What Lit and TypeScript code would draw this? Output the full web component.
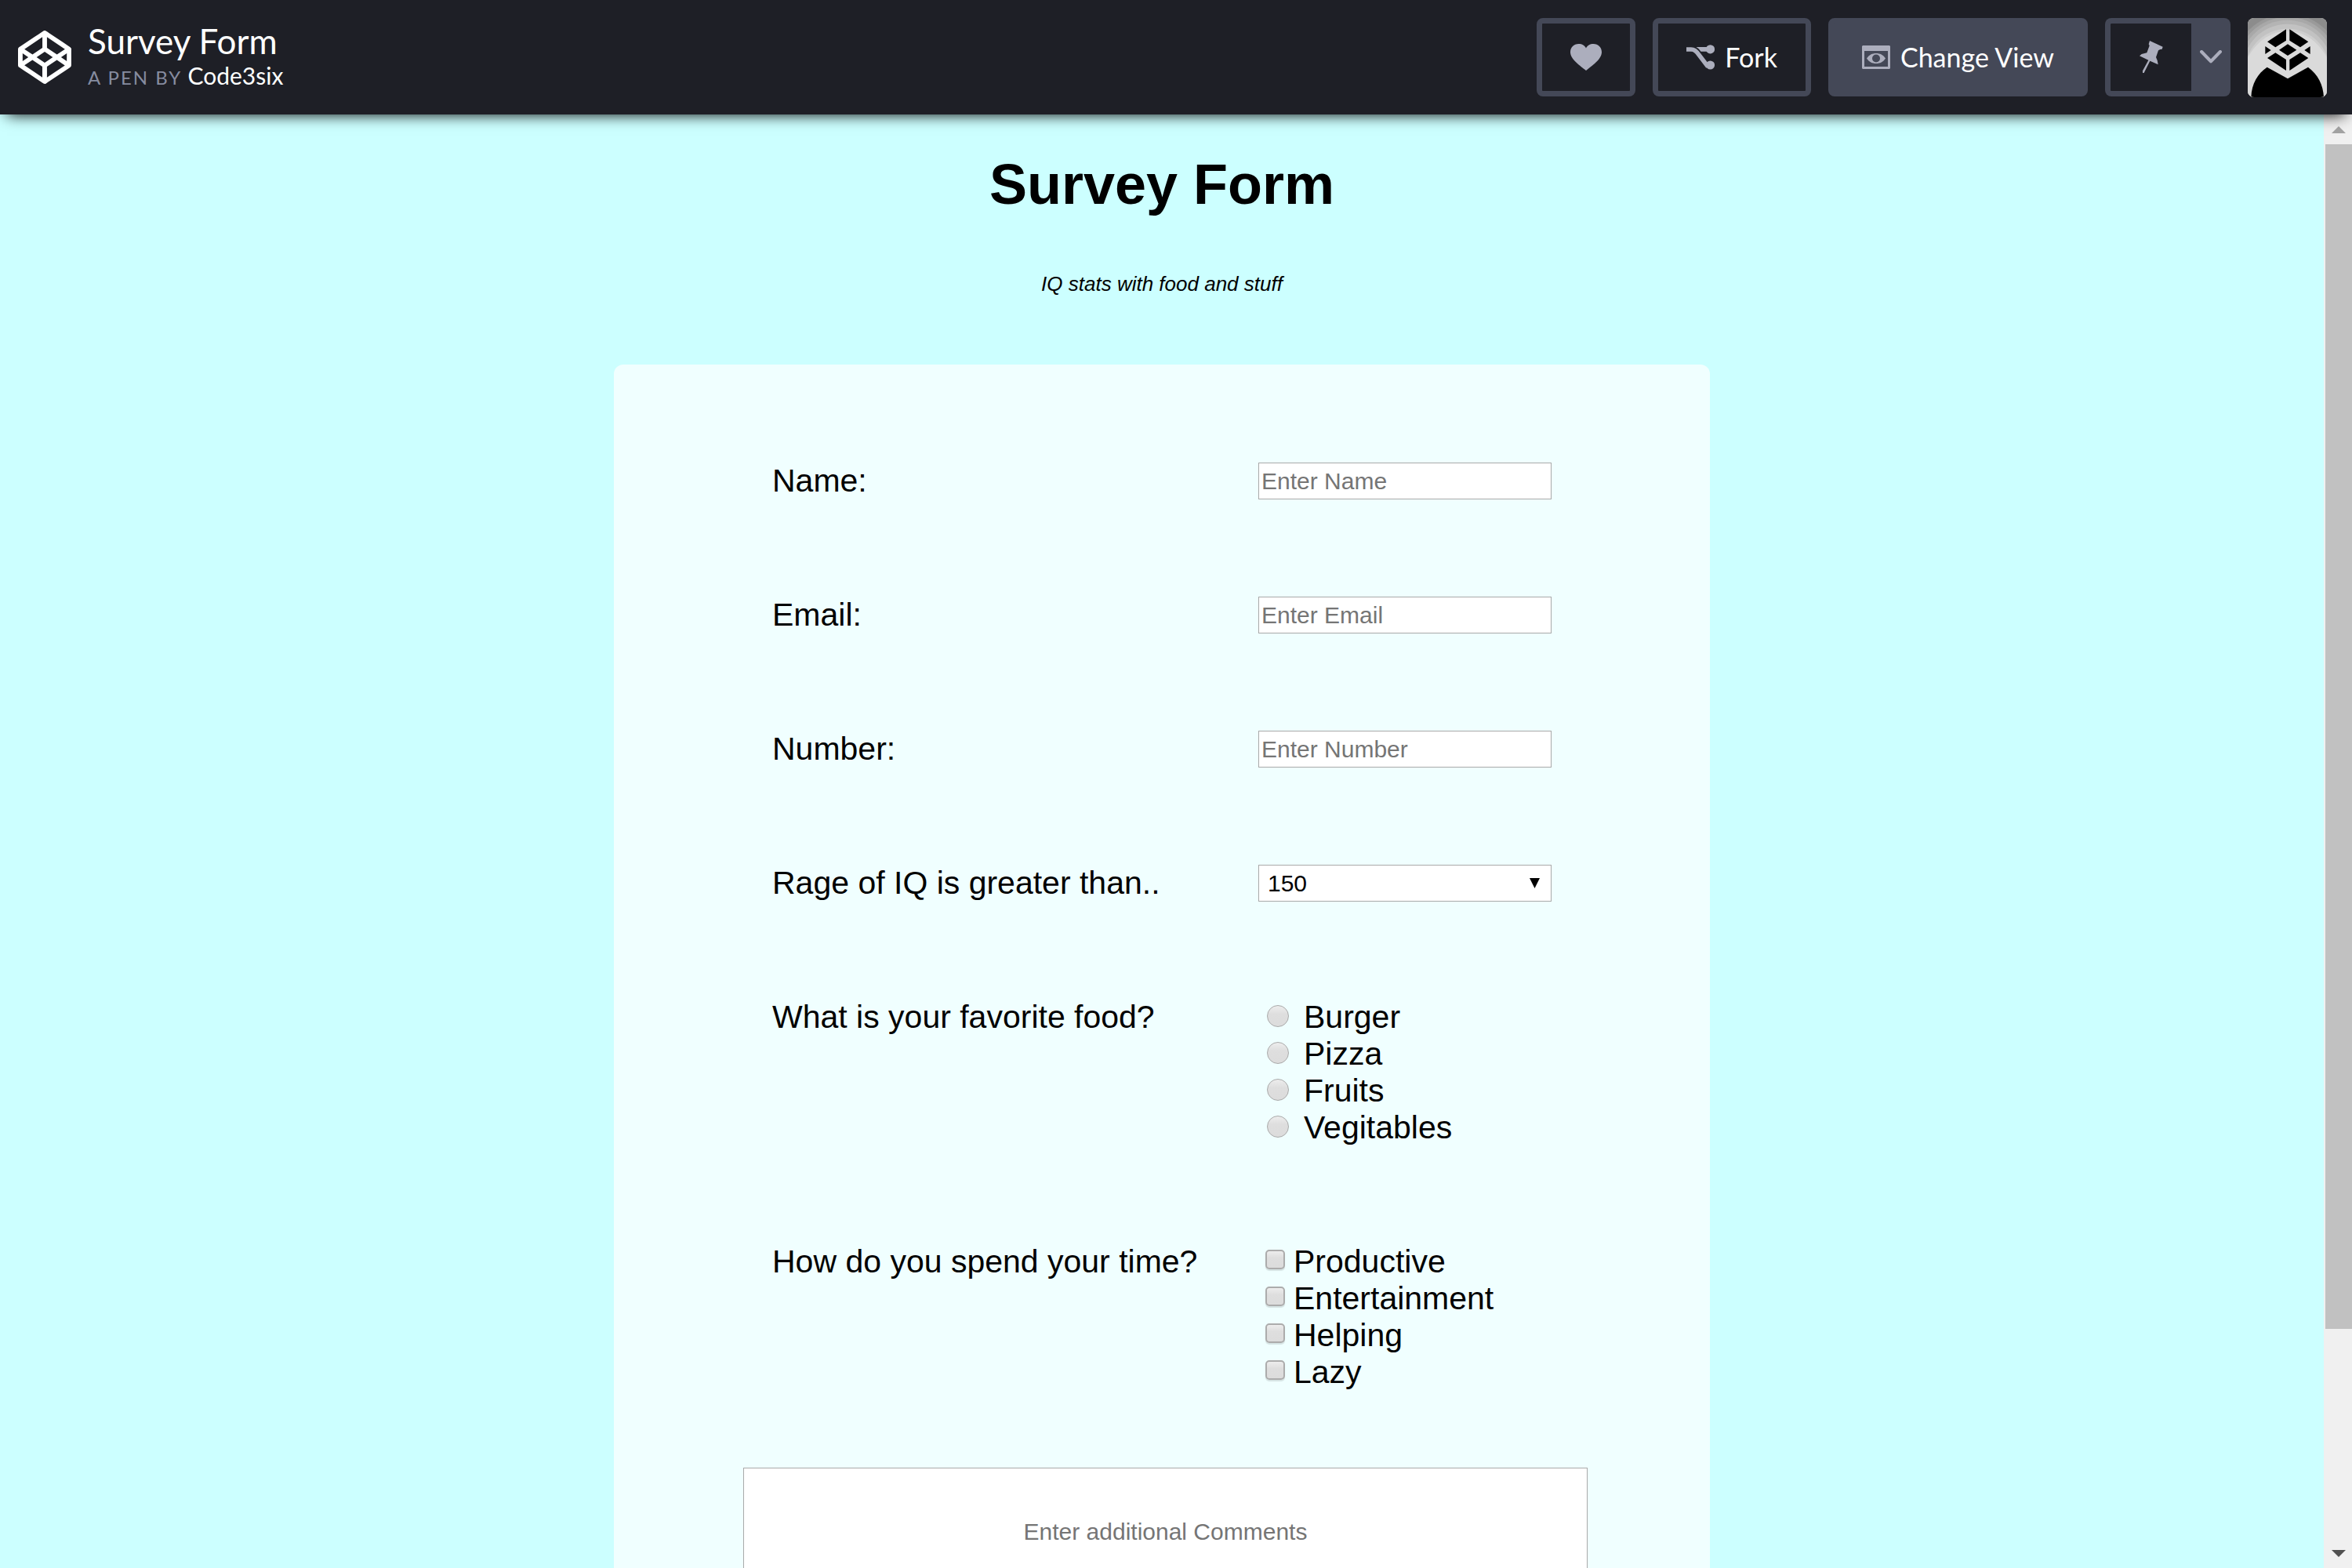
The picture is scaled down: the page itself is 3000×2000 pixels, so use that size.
import { LitElement, html, css, svg } from "lit";
import { customElement } from "lit/decorators.js";

const LOGO = svg`<path fill="currentColor" d="M100 34.2c-.4-2.6-3.3-4-5.3-5.3-3.6-2.4-7.1-4.7-10.7-7.1-8.5-5.7-17.1-11.4-25.6-17.1-2-1.3-4-2.7-6-4-1.4-1-3.3-1-4.8 0-5.7 3.8-11.5 7.7-17.2 11.5L5.2 29C3 30.4.1 31.8 0 34.8c-.1 3.3 0 6.7 0 10v16c0 2.9-.6 6.3 2.1 8.1 6.4 4.4 12.9 8.6 19.4 12.9 8 5.3 16 10.7 24 16 2.2 1.5 4.4 3.1 7.1 1.3 2.3-1.5 4.5-3 6.8-4.5 8.9-5.9 17.8-11.9 26.7-17.8l9.9-6.6c.6-.4 1.3-.8 1.9-1.3 1.4-1 2-2.4 2-4.1V37.3c.1-1.1.2-2.1.1-3.1 0-.1 0 .2 0 0zM54.3 12.3L88 34.8 73 44.9 54.3 32.4V12.3zm-8.6 0v20L27.1 44.8 12 34.8l33.7-22.5zM8.6 42.8L19.3 50 8.6 57.2V42.8zm37.1 44.9L12 65.2l15-10.1 18.6 12.5v20.1zM50 60.2L34.8 50 50 39.8 65.2 50 50 60.2zm4.3 27.5v-20l18.6-12.5 15 10.1-33.6 22.4zm37.1-30.5L80.7 50l10.8-7.2-.1 14.4z"/>`;

@customElement("pen-header")
class PenHeader extends LitElement {
  static styles = css`
    :host {
      display: flex;
      align-items: center;
      box-sizing: border-box;
      height: 146px;
      padding: 0 32px 0 23px;
      background: #1e1f26;
      color: #fff;
      font-family: Lato, "Liberation Sans", sans-serif;
      box-shadow: 0 9px 18px -9px #000;
      position: relative;
      z-index: 1;
    }
    svg {
      display: block;
      flex: none;
    }
    .brand {
      display: flex;
      color: inherit;
    }
    .titles {
      margin-left: 21px;
      flex: 1;
    }
    .title {
      margin: 0;
      font-size: 44px;
      font-weight: 400;
      line-height: 48px;
    }
    .by {
      margin: 0;
      font-size: 24px;
      line-height: 40px;
      color: #868ca0;
      letter-spacing: 2px;
    }
    .author {
      color: #fff;
      font-size: 30px;
      letter-spacing: normal;
      text-decoration: none;
    }
    .actions {
      display: flex;
      gap: 22px;
    }
    .button {
      display: flex;
      align-items: center;
      justify-content: center;
      gap: 13px;
      box-sizing: border-box;
      height: 100px;
      margin: 0;
      padding: 0 36px;
      border: 7px solid #444857;
      border-radius: 8px;
      background: #1e1f26;
      color: #acaebd;
      font: 400 34px/44px Lato, "Liberation Sans", sans-serif;
    }
    .label {
      color: #fff;
    }
    .filled {
      background: #444857;
    }
    .split {
      display: flex;
    }
    .pin {
      width: 110px;
      padding: 0;
      border-right: 0;
      border-radius: 8px 0 0 8px;
    }
    .more {
      width: 50px;
      padding: 0;
      border: 0;
      border-radius: 0 8px 8px 0;
      background: #444857;
    }
    .avatar {
      display: block;
      padding: 0;
      border: 0;
      border-radius: 8px;
      overflow: hidden;
      background: #ddd;
    }
  `;

  render() {
    return html`
      <a class="brand" href="#" aria-label="Home">
        <svg width="68" height="68" viewBox="0 0 100 100">${LOGO}</svg>
      </a>
      <div class="titles">
        <h1 class="title">Survey Form</h1>
        <p class="by">A PEN BY <a class="author" href="#">Code3six</a></p>
      </div>
      <div class="actions">
        <button class="button" aria-label="Love">
          <svg width="40" height="34" viewBox="0 0 40 34">
            <path fill="currentColor" d="M20 34C13 28 0 20 0 10.500 0 4.500 4.500 0 10.500 0 15 0 18.500 2 20 5.500 21.500 2 25 0 29.500 0 35.500 0 40 4.500 40 10.500 40 20 27 28 20 34z"/>
          </svg>
        </button>
        <button class="button">
          <svg width="36" height="32" viewBox="0 0 36 32" fill="currentColor">
            <path d="M0 6h6c5 0 7.500 3 10 7l11.500 15" fill="none" stroke="currentColor" stroke-width="5.600"/>
            <path d="M12.500 3H28v5.800h-9.500C17 6.500 15 4.500 12.500 3z"/>
            <circle cx="30.500" cy="5.800" r="5.600"/>
            <circle cx="30.500" cy="26" r="5.600"/>
          </svg>
          <span class="label">Fork</span>
        </button>
        <button class="button filled">
          <svg width="36" height="30" viewBox="0 0 36 30" fill="currentColor">
            <path fill-rule="evenodd" d="M1 0h34l1 1v28l-1 1H1l-1-1V1zM3 7v20h30V7z"/>
            <path fill-rule="evenodd" d="M6 16.500C9 12 13 10 18 10s9 2 12 6.500C27 21 23 23 18 23S9 21 6 16.500zM18 11.500a5 5 0 1 0 0 10 5 5 0 0 0 0-10z"/>
          </svg>
          <span class="label">Change View</span>
        </button>
        <div class="split">
          <button class="button pin" aria-label="Pin">
            <svg width="30" height="41" viewBox="0 0 90 123">
              <path fill="currentColor" d="M39 0l50 23-3 9-7 1-7 4-9 26 5 12 3 16-31-14-23 46-5 2v-10l22-41L0 58l8-7 20-5 10-27-3-6z"/>
            </svg>
          </button>
          <button class="button more" aria-label="More pin options">
            <svg width="28" height="17" viewBox="0 0 82 50">
              <path d="M6 6l35 36L76 6" fill="none" stroke="currentColor" stroke-width="12" stroke-linecap="round" stroke-linejoin="round"/>
            </svg>
          </button>
        </div>
        <button class="avatar" aria-label="Account">
          <svg width="101" height="101" viewBox="0 0 303 303">
            <rect width="303" height="303" fill="#8c8c8c"/>
            <circle cx="152" cy="190" r="206" fill="#9a9a9a"/>
            <circle cx="152" cy="190" r="194" fill="#a8a8a8"/>
            <circle cx="152" cy="190" r="182" fill="#b4b4b4"/>
            <circle cx="152" cy="195" r="172" fill="#c2c2c2"/>
            <circle cx="152" cy="203" r="162" fill="#cecece"/>
            <path d="M0 303V150Q60 50 152 50t151 100v153z" fill="#dadada"/>
            <path d="M147 43v43l-41 26-31-21zM160 43v43l41 26 31-21zM67 108l22 15-22 15zM239 108l-22 15 22 15zM153 100l34 22-34 22-33-22zM75 153l31-20 41 26v42zM232 153l-31-20-41 26v42zM13 303c2-52 26-92 61-115l79 44 78-44c38 28 58 68 60 115z"/>
          </svg>
        </button>
      </div>
    `;
  }
}

interface TextField {
  id: string;
  label: string;
  type: string;
  placeholder: string;
}

const FIELDS: TextField[] = [
  { id: "name", label: "Name:", type: "text", placeholder: "Enter Name" },
  { id: "email", label: "Email:", type: "email", placeholder: "Enter Email" },
  { id: "number", label: "Number:", type: "number", placeholder: "Enter Number" },
];
const FOODS = ["Burger", "Pizza", "Fruits", "Vegitables"];
const PASTIMES = ["Productive", "Entertainment", "Helping", "Lazy"];

@customElement("survey-form")
class SurveyForm extends LitElement {
  static styles = css`
    :host {
      display: block;
      flex: 1;
      min-width: 0;
      overflow: hidden;
      background: #ccffff;
      color: #000;
      font: 41px/47px "Liberation Sans", Arial, sans-serif;
    }
    .heading {
      margin: 47px 0 0;
      font-size: 72px;
      line-height: 84px;
      text-align: center;
    }
    .tagline {
      margin: 70px 0 0;
      font-size: 26px;
      line-height: 30px;
      font-style: italic;
      text-align: center;
    }
    .card {
      box-sizing: border-box;
      width: 100%;
      max-width: 1398px;
      margin: 88px auto 0;
      padding: 125px 0;
      border-radius: 12px;
      background: #f0ffff;
    }
    .rows {
      display: grid;
      gap: 124px;
      padding: 0 202px;
    }
    .row {
      display: grid;
      grid-template-columns: 1fr 374px;
      min-height: 47px;
    }
    .control {
      display: block;
      box-sizing: border-box;
      width: 100%;
      height: 47px;
      margin: 0;
      border: 1px solid #a9a9a9;
      border-radius: 0;
      background: #fff;
      color: #000;
      font: 30px/34px "Liberation Sans", Arial, sans-serif;
    }
    .text {
      padding: 1px 3px;
    }
    .text::placeholder,
    .comments::placeholder {
      color: #757575;
    }
    .picker {
      position: relative;
    }
    .select {
      appearance: none;
      padding: 0 11px;
    }
    .arrow {
      position: absolute;
      right: 15px;
      top: 17px;
      pointer-events: none;
    }
    .option {
      display: flex;
      align-items: flex-start;
    }
    .radio,
    .check {
      appearance: none;
      box-sizing: border-box;
      flex: none;
      border: 1px solid #a9a9a9;
      background: linear-gradient(#ededed, #dedede 40%, #dcdcdc);
    }
    .radio {
      width: 28px;
      height: 28px;
      margin: 8px 19px 0 11px;
      border-radius: 50%;
    }
    .check {
      width: 25px;
      height: 25px;
      margin: 8px 11px 0 9px;
      border: 2px solid #acacac;
      border-radius: 5px;
      box-shadow: 0 2px 1px #d5e3e3;
    }
    .comments {
      display: block;
      box-sizing: border-box;
      width: calc(100% - 321px);
      height: 190px;
      margin: 98px 156px 0 165px;
      padding: 64px 4px;
      border: 1px solid #a9a9a9;
      background: #fff;
      font: 30px/34px "Liberation Sans", Arial, sans-serif;
      text-align: center;
      resize: none;
    }
  `;

  render() {
    return html`
      <h1 class="heading">Survey Form</h1>
      <p class="tagline">IQ stats with food and stuff</p>
      <form class="card">
        <div class="rows">
          ${FIELDS.map(
            (f) => html`
              <div class="row">
                <label for=${f.id}>${f.label}</label>
                <input class="control text" id=${f.id} type=${f.type} placeholder=${f.placeholder} />
              </div>
            `
          )}
          <div class="row">
            <label for="iq">Rage of IQ is greater than..</label>
            <div class="picker">
              <select class="control select" id="iq">
                <option>150</option>
              </select>
              <svg class="arrow" width="13" height="13" viewBox="0 0 13 13"><path d="M0 0h13L6.500 13z"/></svg>
            </div>
          </div>
          <div class="row" role="radiogroup" aria-labelledby="food">
            <span id="food">What is your favorite food?</span>
            <div>
              ${FOODS.map(
                (name) => html`<label class="option"><input class="radio" type="radio" name="food" />${name}</label>`
              )}
            </div>
          </div>
          <div class="row" role="group" aria-labelledby="time">
            <span id="time">How do you spend your time?</span>
            <div>
              ${PASTIMES.map(
                (name) => html`<label class="option"><input class="check" type="checkbox" name="time" />${name}</label>`
              )}
            </div>
          </div>
        </div>
        <textarea class="comments" aria-label="Comments" placeholder="Enter additional Comments"></textarea>
      </form>
    `;
  }
}

@customElement("scroll-rail")
class ScrollRail extends LitElement {
  static styles = css`
    :host {
      display: flex;
      flex-direction: column;
      flex: none;
      width: 36px;
      background: #f0f0f0;
    }
    .step {
      display: flex;
      align-items: center;
      justify-content: center;
      height: 38px;
      padding: 0 0 0 2px;
      margin: 0;
      border: 0;
      background: none;
      color: #505050;
    }
    .up {
      color: #a3a3a3;
    }
    .track {
      flex: 1;
    }
    .thumb {
      height: 85%;
      margin-left: 2px;
      background: #c1c1c1;
    }
  `;

  render() {
    return html`
      <button class="step up" aria-label="Scroll up">
        <svg width="18" height="9" viewBox="0 0 18 9"><path fill="currentColor" d="M9 0l9 9H0z"/></svg>
      </button>
      <div class="track"><div class="thumb"></div></div>
      <button class="step" aria-label="Scroll down">
        <svg width="18" height="9" viewBox="0 0 18 9"><path fill="currentColor" d="M0 0h18L9 9z"/></svg>
      </button>
    `;
  }
}

@customElement("app-root")
class AppRoot extends LitElement {
  static styles = css`
    :host {
      display: flex;
      flex-direction: column;
      height: 100vh;
      overflow: hidden;
    }
    .view {
      display: flex;
      flex: 1;
      min-height: 0;
    }
  `;

  render() {
    return html`
      <pen-header></pen-header>
      <div class="view">
        <survey-form></survey-form>
        <scroll-rail></scroll-rail>
      </div>
    `;
  }
}
